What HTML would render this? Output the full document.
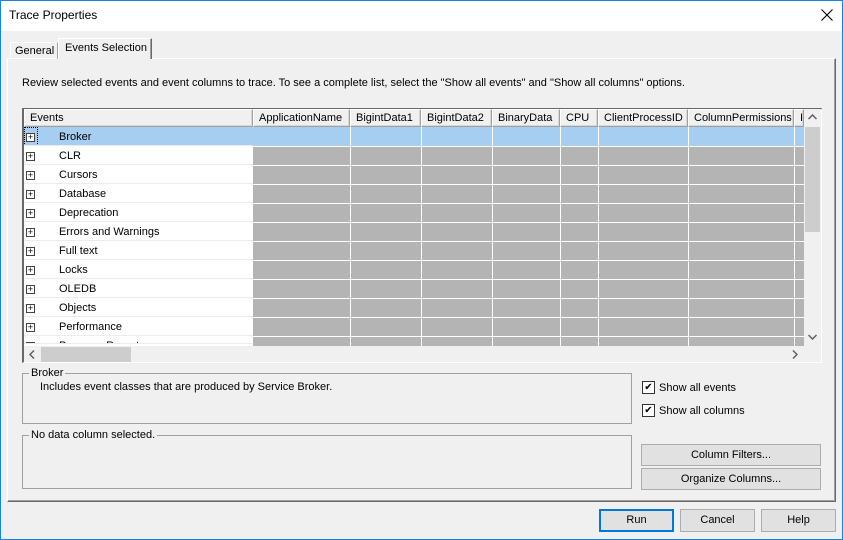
<!DOCTYPE html>
<html><head><style>
*{box-sizing:border-box;margin:0;padding:0}
body{width:843px;height:540px;background:#f0f0f0;font-family:"Liberation Sans",sans-serif;font-size:11px;color:#000;position:relative;overflow:hidden}
.a{position:absolute;white-space:nowrap}
.btn{position:absolute;background:#e1e1e1;border:1px solid #adadad;text-align:center;line-height:20px}
.hd{position:absolute;top:109px;height:18px;background:#f0f0f0;border:1px solid #a0a0a0;border-left-color:#fff;border-top-color:#fff;padding-left:5px;line-height:16px;box-shadow:inset -1px -1px 0 #d8d8d8;overflow:hidden}
.cb{position:absolute;width:13px;height:13px;border:1px solid #333;background:#fff;font-size:10px;line-height:11px;text-align:center}
</style></head><body>
<div class="a" style="left:0;top:0;width:843px;height:540px;border:1px solid #1883d7"></div>
<div class="a" style="left:1px;top:1px;width:841px;height:30px;background:#fff"></div>
<div class="a" style="left:9px;top:8px;font-size:12px">Trace Properties</div>
<svg class="a" style="left:821px;top:9px" width="12" height="12"><path d="M0.5 0.5L11.5 11.5M11.5 0.5L0.5 11.5" stroke="#000" stroke-width="1.1"/></svg>

<div class="a" style="left:7px;top:58px;width:829px;height:444px;border:1px solid #fff;border-right-color:#696969;border-bottom-color:#696969;box-shadow:inset -1px -1px 0 #a0a0a0"></div>
<div class="a" style="left:10px;top:42px;width:48px;height:17px;border:1px solid #fff;border-right-color:#a0a0a0;border-bottom:none;padding-left:4px;line-height:16px">General</div>
<div class="a" style="left:58px;top:38px;width:94px;height:21px;border:1px solid #fff;border-right:1px solid #696969;border-bottom:none;background:#f0f0f0;padding-left:6px;line-height:19px;box-shadow:inset -1px 0 0 #a0a0a0">Events Selection</div>
<div class="a" style="left:22px;top:77px">Review selected events and event columns to trace. To see a complete list, select the "Show all events" and "Show all columns" options.</div>

<div class="a" style="left:22px;top:108px;width:800px;height:255px;border:1px solid #a0a0a0;border-right-color:#fff;border-bottom-color:#fff;border-left:2px solid #696969;border-top:2px solid #696969;background:#f0f0f0"></div>
<div class="a" style="left:24px;top:127px;width:229px;height:219px;background:#fff"></div>
<div class="a" style="left:253px;top:127px;width:551px;height:219px;background:#b4b4b4;overflow:hidden">
<svg width="551" height="219" style="position:absolute;left:0;top:0">
<g stroke="#fff" stroke-width="1">
<path d="M97.5 0V219M168.5 0V219M239.5 0V219M307.5 0V219M345.5 0V219M435.5 0V219M541.5 0V219"/>
<path d="M0 19.5H551M0 38.5H551M0 57.5H551M0 76.5H551M0 95.5H551M0 114.5H551M0 133.5H551M0 152.5H551M0 171.5H551M0 190.5H551M0 209.5H551"/>
</g></svg>
<div class="a" style="left:0;top:0;width:551px;height:19px;background:#a6cef0"></div>
<svg width="551" height="19" style="position:absolute;left:0;top:0"><path d="M97.5 0V19M168.5 0V19M239.5 0V19M307.5 0V19M345.5 0V19M435.5 0V19M541.5 0V19" stroke="#fff"/></svg>
</div>
<div class="a" style="left:24px;top:127px;width:229px;height:19px;background:#a6cef0"></div>
<div class="a" style="left:24px;top:127px;width:14px;height:19px;border:1px dotted #000"></div>

<div class="hd" style="left:24px;width:229px">Events</div>
<div class="hd" style="left:253px;width:97px">ApplicationName</div>
<div class="hd" style="left:350px;width:71px">BigintData1</div>
<div class="hd" style="left:421px;width:71px">BigintData2</div>
<div class="hd" style="left:492px;width:68px">BinaryData</div>
<div class="hd" style="left:560px;width:38px">CPU</div>
<div class="hd" style="left:598px;width:90px">ClientProcessID</div>
<div class="hd" style="left:688px;width:106px">ColumnPermissions</div>
<div class="hd" style="left:794px;width:10px">I</div>

<div id="rows"></div>
<div class="a" style="left:804px;top:109px;width:17px;height:237px;background:#f0f0f0"></div>
<div class="a" style="left:805px;top:127px;width:15px;height:105px;background:#cdcdcd"></div>
<svg class="a" style="left:808px;top:114px" width="9" height="6"><path d="M0.5 5L4.5 1L8.5 5" stroke="#606060" stroke-width="1.5" fill="none"/></svg>
<svg class="a" style="left:808px;top:334px" width="9" height="6"><path d="M0.5 1L4.5 5L8.5 1" stroke="#606060" stroke-width="1.5" fill="none"/></svg>
<div class="a" style="left:24px;top:346px;width:797px;height:16px;background:#f0f0f0"></div>
<div class="a" style="left:41px;top:347px;width:90px;height:15px;background:#cdcdcd"></div>
<svg class="a" style="left:29px;top:350px" width="6" height="9"><path d="M5 0.5L1 4.5L5 8.5" stroke="#606060" stroke-width="1.5" fill="none"/></svg>
<svg class="a" style="left:792px;top:350px" width="6" height="9"><path d="M1 0.5L5 4.5L1 8.5" stroke="#606060" stroke-width="1.5" fill="none"/></svg>

<div class="a" style="left:22px;top:373px;width:610px;height:51px;border:1px solid #a0a0a0"></div>
<div class="a" style="left:29px;top:367px;background:#f0f0f0;padding:0 2px">Broker</div>
<div class="a" style="left:40px;top:381px">Includes event classes that are produced by Service Broker.</div>
<div class="a" style="left:22px;top:435px;width:610px;height:54px;border:1px solid #a0a0a0"></div>
<div class="a" style="left:29px;top:429px;background:#f0f0f0;padding:0 2px">No data column selected.</div>

<div class="cb" style="left:642px;top:381px">✔</div>
<div class="a" style="left:659px;top:382px">Show all events</div>
<div class="cb" style="left:642px;top:404px">✔</div>
<div class="a" style="left:659px;top:405px">Show all columns</div>

<div class="btn" style="left:641px;top:444px;width:180px;height:22px">Column Filters...</div>
<div class="btn" style="left:641px;top:468px;width:180px;height:22px">Organize Columns...</div>
<div class="btn" style="left:599px;top:509px;width:75px;height:23px;border:2px solid #0078d7;line-height:19px">Run</div>
<div class="btn" style="left:680px;top:509px;width:75px;height:23px">Cancel</div>
<div class="btn" style="left:761px;top:509px;width:75px;height:23px">Help</div>

<script>
var n=["Broker","CLR","Cursors","Database","Deprecation","Errors and Warnings","Full text","Locks","OLEDB","Objects","Performance","Progress Report"],h="";
for(var i=0;i<n.length;i++){var t=127+i*19;
h+='<div class="a" style="left:24px;top:'+t+'px;width:229px;height:'+(i==11?8:19)+'px;overflow:hidden;border-bottom:1px solid #ececec">'+
'<div class="a" style="left:2px;top:6px;width:9px;height:9px;border:1px solid #444;background:#fff;font-size:9px;line-height:7px;text-align:center">+</div>'+
'<div class="a" style="left:35px;top:4px">'+n[i]+'</div></div>';}
document.getElementById("rows").innerHTML=h;
</script>
</body></html>
